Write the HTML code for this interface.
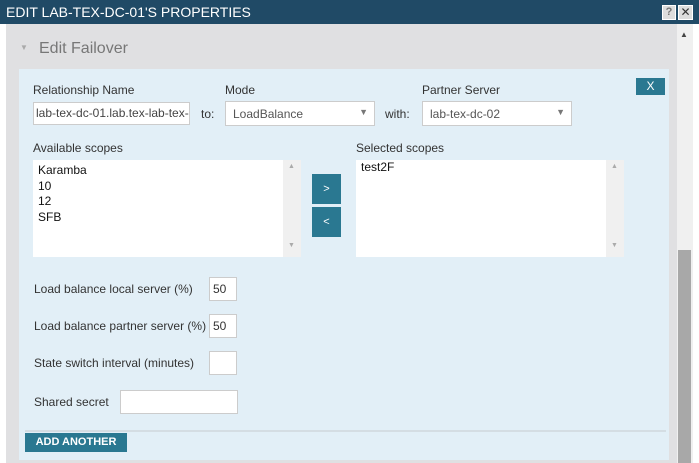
<!DOCTYPE html><html><head><style>
body{margin:0;width:699px;height:463px;overflow:hidden;font-family:"Liberation Sans",sans-serif;font-size:12px;color:#333;background:#fff;position:relative}
.a{position:absolute}
.inp{position:absolute;background:#fff;border:1px solid #ccc;box-sizing:border-box;font-size:12px;color:#555;padding:3px 5px;white-space:nowrap;overflow:hidden}
.lbl{position:absolute;font-size:12px;color:#333}
.btn{position:absolute;background:#2a7891;color:#fff;text-align:center;font-size:11px}
</style></head><body>
<div class="a" style="left:0;top:0;width:699px;height:24px;background:#204a66"></div>
<div class="a" style="left:6px;top:4px;color:#fff;font-size:14px">EDIT LAB-TEX-DC-01'S PROPERTIES</div>
<div class="a" style="left:662px;top:5px;width:14px;height:15px;background:#ddd;border:1px solid #fff;box-sizing:border-box;color:#777;font-size:11px;font-weight:bold;text-align:center;line-height:13px">?</div>
<div class="a" style="left:678px;top:5px;width:15px;height:15px;background:#ddd;border:1px solid #fff;box-sizing:border-box;color:#333;font-size:12px;text-align:center;line-height:13px">✕</div>
<div class="a" style="left:0;top:24px;width:6px;height:439px;background:#fff"></div>
<div class="a" style="left:6px;top:24px;width:671px;height:439px;background:#e0e0e2"></div>
<div class="a" style="left:677px;top:24px;width:16px;height:439px;background:#f0f0f0"></div>
<div class="a" style="left:678px;top:250px;width:13px;height:213px;background:#a8a8a8"></div>
<div class="a" style="left:680px;top:30px;font-size:8px;color:#444">▲</div>
<div class="a" style="left:20px;top:43px;font-size:8px;color:#aaa">▼</div>
<div class="a" style="left:39px;top:40px;font-size:16px;color:#777">Edit Failover</div>
<div class="a" style="left:19px;top:69px;width:650px;height:391px;background:#e2eff7"></div>
<div class="lbl" style="left:33px;top:83px">Relationship Name</div>
<div class="lbl" style="left:225px;top:83px">Mode</div>
<div class="lbl" style="left:422px;top:83px">Partner Server</div>
<div class="btn" style="left:636px;top:78px;width:29px;height:17px;line-height:17px;font-size:12px">X</div>
<div class="inp" style="left:33px;top:102px;width:157px;height:23px;padding:3px 2px;color:#444">lab-tex-dc-01.lab.tex-lab-tex-</div>
<div class="lbl" style="left:201px;top:107px">to:</div>
<div class="inp" style="left:225px;top:101px;width:150px;height:25px;padding:5px 7px">LoadBalance<span style="position:absolute;right:6px;top:5px;font-size:9px;color:#777">▼</span></div>
<div class="lbl" style="left:385px;top:107px">with:</div>
<div class="inp" style="left:422px;top:101px;width:150px;height:25px;padding:5px 7px">lab-tex-dc-02<span style="position:absolute;right:6px;top:5px;font-size:9px;color:#777">▼</span></div>
<div class="lbl" style="left:33px;top:141px">Available scopes</div>
<div class="lbl" style="left:356px;top:141px">Selected scopes</div>
<div class="a" style="left:33px;top:160px;width:268px;height:97px;background:#fff"></div>
<div class="a" style="left:283px;top:160px;width:18px;height:97px;background:#f0f0f0"></div>
<div class="a" style="left:288px;top:163px;font-size:7px;color:#aaa">▲</div><div class="a" style="left:288px;top:242px;font-size:7px;color:#aaa">▼</div>
<div class="a" style="left:38px;top:163px;line-height:15.5px;color:#111">Karamba<br>10<br>12<br>SFB</div>
<div class="btn" style="left:312px;top:174px;width:29px;height:30px;line-height:30px">&gt;</div>
<div class="btn" style="left:312px;top:207px;width:29px;height:30px;line-height:30px">&lt;</div>
<div class="a" style="left:356px;top:160px;width:268px;height:97px;background:#fff"></div>
<div class="a" style="left:606px;top:160px;width:18px;height:97px;background:#f0f0f0"></div>
<div class="a" style="left:611px;top:163px;font-size:7px;color:#aaa">▲</div><div class="a" style="left:611px;top:242px;font-size:7px;color:#aaa">▼</div>
<div class="a" style="left:361px;top:160px;color:#111">test2F</div>
<div class="lbl" style="left:34px;top:282px">Load balance local server (%)</div>
<div class="inp" style="left:209px;top:277px;width:28px;height:24px;padding:4px 3px;color:#333">50</div>
<div class="lbl" style="left:34px;top:319px">Load balance partner server (%)</div>
<div class="inp" style="left:209px;top:314px;width:28px;height:24px;padding:4px 3px;color:#333">50</div>
<div class="lbl" style="left:34px;top:356px">State switch interval (minutes)</div>
<div class="inp" style="left:209px;top:351px;width:28px;height:24px"></div>
<div class="lbl" style="left:34px;top:395px">Shared secret</div>
<div class="inp" style="left:120px;top:390px;width:118px;height:24px"></div>
<div class="a" style="left:25px;top:430px;width:641px;height:2px;background:#d4dde3"></div>
<div class="btn" style="left:25px;top:433px;width:102px;height:19px;line-height:19px;font-weight:bold;font-size:11px">ADD ANOTHER</div>
</body></html>
